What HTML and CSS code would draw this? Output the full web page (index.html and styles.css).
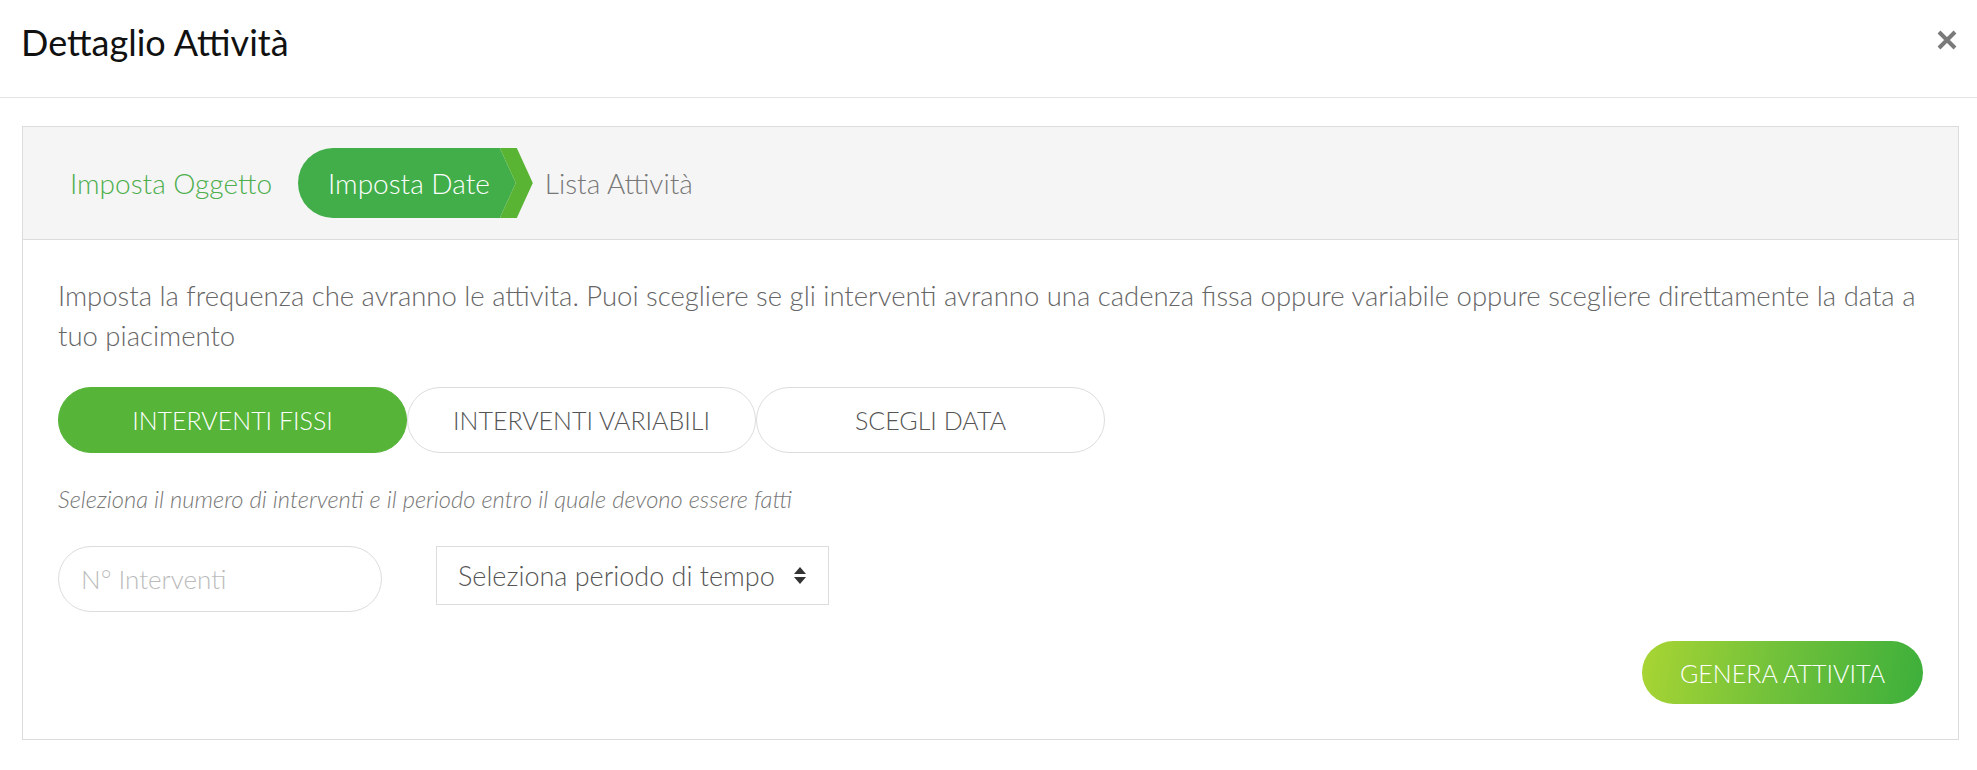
FILE: index.html
```html
<!DOCTYPE html>
<html>
    <head>
        <title>Dettaglio Attività</title>
        <link rel="stylesheet" href="styles.css">
    </head>
    <body>
        <div class="modal">
            <div class="modal-header">
                <h1 class="modal-title">Dettaglio Attività</h1>
                <button class="close" title="Chiudi">
                    <svg width="20" height="20" viewBox="0 0 20 20">
                        <path d="M2 2 L18 18 M18 2 L2 18" stroke="#7a7a7a" stroke-width="4" fill="none"/>
                    </svg>
                </button>
            </div>
            <div class="modal-body">
                <div class="wizard">
                    <div class="steps">
                        <span class="step done">Imposta Oggetto</span>
                        <span class="step active">Imposta Date</span>
                        <span class="step">Lista Attività</span>
                    </div>
                    <div class="wizard-content">
                        <p class="intro">Imposta la frequenza che avranno le attivita. Puoi scegliere se gli interventi avranno una cadenza fissa oppure variabile oppure scegliere direttamente la data a tuo piacimento</p>
                        <div class="mode-group">
                            <button class="mode active">Interventi fissi</button>
                            <button class="mode">Interventi variabili</button>
                            <button class="mode">Scegli data</button>
                        </div>
                        <p class="hint">Seleziona il numero di interventi e il periodo entro il quale devono essere fatti</p>
                        <div class="fields">
                            <input class="input-pill" type="text" placeholder="N° Interventi">
                            <div class="select">
                                <span>Seleziona periodo di tempo</span>
                                <svg width="12" height="17" viewBox="0 0 12 17">
                                    <path d="M6 0 L12 7 L0 7 Z M0 10 L12 10 L6 17 Z" fill="#333"/>
                                </svg>
                            </div>
                        </div>
                        <div class="actions">
                            <button class="btn-generate">Genera attivita</button>
                        </div>
                    </div>
                </div>
            </div>
        </div>
    </body>
</html>
```

FILE: styles.css
```css
body {
    margin: 0;
    font-family: Lato, "Open Sans", sans-serif;
    background-color: #fff;
}

.modal-header {
    display: flex;
    justify-content: space-between;
    align-items: flex-start;
    padding: 21px 20px 33px 21px;
    border-bottom: 1px solid #e3e3e3;
}

.modal-title {
    margin: 0;
    font-size: 36px;
    line-height: 43px;
    font-weight: 400;
    color: #111;
}

.close {
    margin-top: 9px;
    padding: 0;
    border: none;
    background: none;
    line-height: 0;
    cursor: pointer;
}

.modal-body {
    padding: 28px 18px 30px 22px;
}

.wizard {
    border: 1px solid #dcdcdc;
}

.steps {
    display: flex;
    align-items: center;
    padding: 21px 0 21px 47px;
    background-color: #f5f5f5;
    border-bottom: 1px solid #dcdcdc;
    font-size: 28px;
    font-weight: 300;
}

.step {
    color: #777;
}

.step.done {
    color: #4cae4c;
    margin-right: 26px;
}

.step.active {
    position: relative;
    display: flex;
    align-items: center;
    height: 70px;
    padding: 0 10px 0 30px;
    margin-right: 45px;
    border-radius: 35px 0 0 35px;
    background-color: #42ae4a;
    color: #fff;
}

.step.active::before,
.step.active::after {
    content: "";
    position: absolute;
    top: 0;
    left: 100%;
    height: 100%;
}

.step.active::before {
    width: 16px;
    background-color: #42ae4a;
    clip-path: polygon(0 0, 100% 50%, 0 100%);
}

.step.active::after {
    width: 33px;
    background-color: #58b432;
    clip-path: polygon(0 0, 17px 0, 100% 50%, 17px 100%, 0 100%, 16px 50%);
}

.wizard-content {
    padding: 36px 35px 35px 35px;
}

.intro {
    margin: 0;
    font-size: 27.5px;
    line-height: 40px;
    font-weight: 300;
    color: #666;
}

.mode-group {
    display: flex;
    margin-top: 31px;
}

.mode {
    width: 349px;
    height: 66px;
    border: 1px solid #dddddd;
    border-radius: 33px;
    background-color: #fff;
    font-family: Lato, sans-serif;
    font-size: 25px;
    font-weight: 300;
    color: #555;
    text-transform: uppercase;
    cursor: pointer;
}

.mode.active {
    background-color: #56b438;
    border-color: #56b438;
    color: #fff;
}

.hint {
    margin: 31px 0 0;
    font-size: 23.75px;
    line-height: 30px;
    font-style: italic;
    font-weight: 300;
    color: #777;
}

.fields {
    display: flex;
    align-items: flex-start;
    gap: 54px;
    margin-top: 32px;
}

.input-pill {
    box-sizing: border-box;
    width: 324px;
    height: 66px;
    padding: 0 22px;
    border: 1px solid #dddddd;
    border-radius: 33px;
    font-family: Lato, sans-serif;
    font-size: 26px;
    font-weight: 300;
    color: #555;
    outline: none;
}

.input-pill::placeholder {
    color: #bbb;
}

.select {
    box-sizing: border-box;
    display: flex;
    justify-content: space-between;
    align-items: center;
    width: 393px;
    height: 59px;
    padding: 0 22px 0 21px;
    border: 1px solid #dddddd;
    font-size: 27px;
    font-weight: 300;
    color: #555;
}

.actions {
    display: flex;
    justify-content: flex-end;
    margin-top: 29px;
}

.btn-generate {
    width: 281px;
    height: 63px;
    border: none;
    border-radius: 32px;
    background: linear-gradient(100deg, #a9d533 0%, #74c23a 45%, #3caf3b 100%);
    font-family: Lato, sans-serif;
    font-size: 25px;
    font-weight: 300;
    color: #fff;
    text-transform: uppercase;
    cursor: pointer;
}
```
